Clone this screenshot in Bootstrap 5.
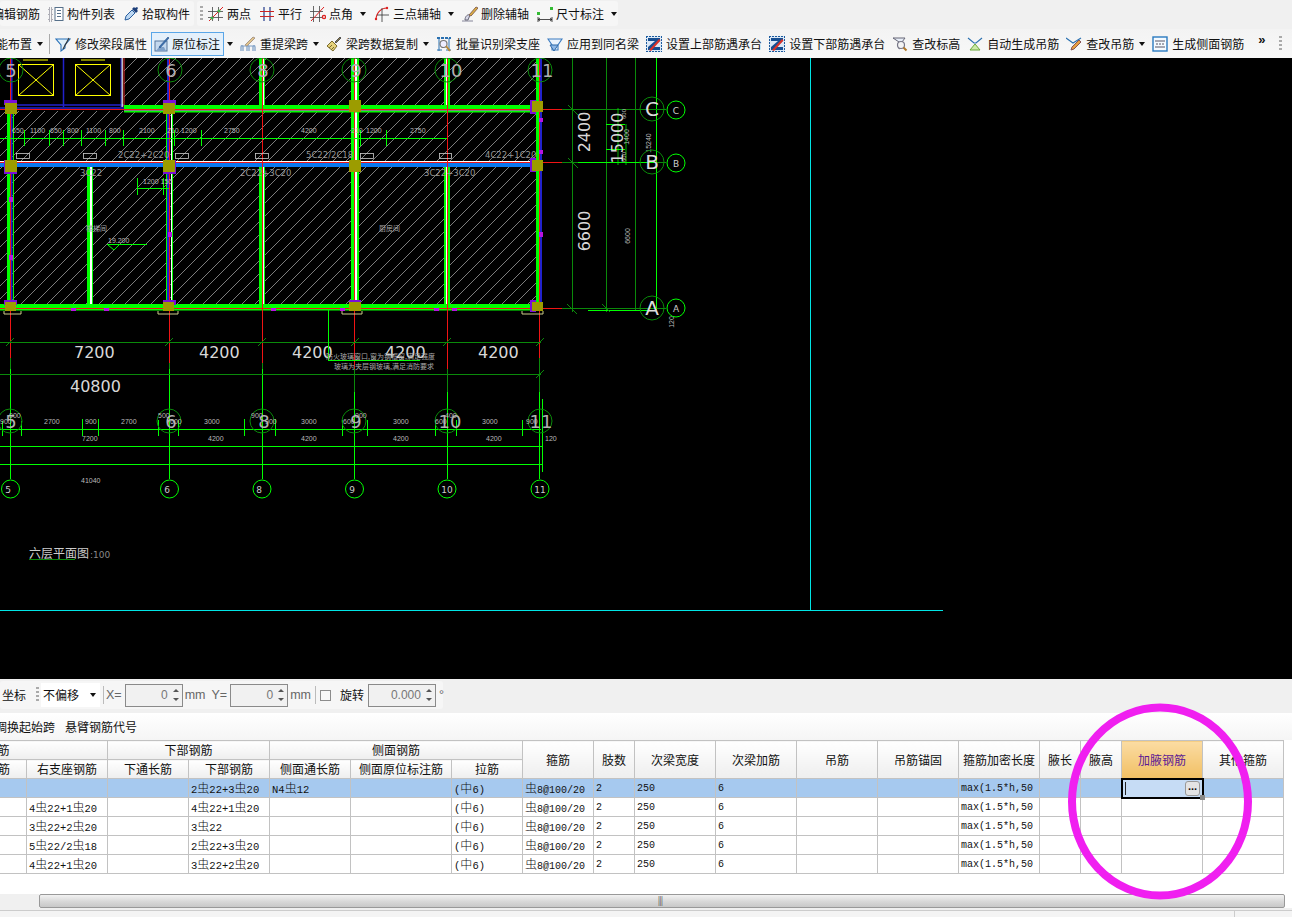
<!DOCTYPE html>
<html lang="zh">
<head>
<meta charset="utf-8">
<title>梁平法表格</title>
<link href="https://cdn.jsdelivr.net/npm/bootstrap@5.3.0/dist/css/bootstrap.min.css" rel="stylesheet">
<style>
html,body{height:917px;overflow:hidden;background:#f0f0f0}
body{font-family:"Noto Sans CJK SC","Liberation Sans",sans-serif;font-size:12px;color:#111;line-height:1}
.app{width:1292px;height:917px;position:relative;overflow:hidden}
.app>*{flex:none}
.tbar-a{height:29px;background:#f0f0f0;padding-top:1px}
.tbar-b{height:29px;background:linear-gradient(#f3f3f3,#f8f8f8)}
.chunk{height:25px;background:#f6f6f6;border-radius:3px;white-space:nowrap}
.chunk-one{width:194px;margin-right:3px;gap:8px}
.chunk-one .clipped{margin-left:-8px;flex:none}
.chunk-two{width:421px;padding-left:3px;gap:8px}
.chunk-two .grip{margin-right:-3px}
.tool{display:flex;align-items:center;gap:3px;white-space:nowrap;flex:none}
.row-two .tool{gap:4px}
.tool svg{width:16px;height:16px;flex:none}
.arrow{width:0;height:0;border:3.500px solid transparent;border-top:4px solid #111;border-bottom:0;margin-left:5px;flex:none}
.row-two .tool .arrow{margin-left:1px}
.row-two .tool svg+.arrow,.row-two .tool .arrow.far{margin-left:1px}
.grip{width:3px;height:16px;flex:none;background:repeating-linear-gradient(#aaa 0 2px,transparent 2px 4px)}
.vsep{width:1px;height:20px;background:#aaa;flex:none}
.row-two{gap:7px}
.clip-lead{margin-left:-16px}
.clip-lead+.vsep{margin-left:-1px;margin-right:-2px}
.row-two .tool.pressed{border:1px solid #5aa6e8;background:#e4f0fb;height:24px;padding:0 3px 0 2px;margin:0 -5px 0 -3px;gap:2px}
.overflow-mark{font-size:13px;font-weight:700;margin-left:7px;margin-top:-8px;font-family:"Liberation Sans",sans-serif}
.grip-end{margin-left:7px}
.drawing{height:621px;background:#000}
.drawing svg{display:block;width:1292px;height:621px}
.coordbar{height:34px;background:#f0f0f0;padding-top:2px}
.coordgroup{width:443px;height:28px;background:#f6f6f6;padding-left:2px;border-radius:3px}
.coordgroup>*{flex:none;white-space:nowrap}
.grip-gap{margin-left:10px}
.mini-sep{width:1px;height:18px;background:#bbb}
.picker{width:59px;height:24px;background:#fff;padding-left:2px;margin:0 3px 0 2px}
.numbox{height:23px;border:1px solid #8a8a8a;background:#f1f1f1;color:#777;display:flex;align-items:center;justify-content:flex-end;padding-right:3px;font-family:"Liberation Sans",sans-serif;font-size:12px}
.nb-s{width:58px}.nb-l{width:68px}
.spin{display:flex;flex-direction:column;gap:6px;margin-left:5px}
.spin i{display:block;width:0;height:0;border:3px solid transparent}
.spin i:first-child{border-bottom:3px solid #555;border-top:0}
.spin i:last-child{border-top:3px solid #555;border-bottom:0}
.unit{font-family:"Liberation Sans",sans-serif;color:#666;font-size:12.5px}
.sp2{margin-left:2px}.sp3{margin-left:3px}.sp6{margin-left:6px}.sp9{margin-left:9px}
.tick{width:11px;height:11px;border:1px solid #8c8c8c;background:#f8f8f8}
.linkbar{height:27px;background:linear-gradient(#fff,#f5f5f5);gap:10px}
.linkbar span:first-child{margin-left:-5px}
.gridwrap{background:#fff;height:154px;overflow:hidden}
.sheet{table-layout:fixed;width:1420px;margin-left:-137px;border-collapse:collapse;background:#fff}
.sheet th,.sheet td{border:1px solid #c2c2c2;height:19px;padding:0;overflow:hidden;white-space:nowrap}
.sheet th{font-weight:400;text-align:center;background:linear-gradient(#fff,#eee);font-size:12px}
.sheet td{padding-left:2px;padding-top:1px;font-family:"Liberation Mono",monospace;font-size:10px;vertical-align:middle}
.sheet td .cn{font-family:"Noto Sans CJK SC",sans-serif;font-size:12px;font-weight:300}
.sheet td.bars{font-size:10.5px}
.sheet tr.picked td{background:#a6c9ef}
.sheet th.live{background:linear-gradient(#fbdca3,#f1bf63);color:#5c1a94}
.sheet td.editing{background:#c6dcf5!important;outline:2px solid #000;outline-offset:-1px;position:relative;overflow:visible}
.cursor{display:inline-block;width:1px;height:13px;background:#222;margin-left:1px;vertical-align:middle}
.more{position:absolute;right:2px;top:2px;width:15px;height:15px;border:1px solid #999;border-radius:3px;background:#e4e4e4;font-family:"Liberation Sans",sans-serif;font-weight:700;font-size:11px;line-height:9px;text-align:center}
.handle{position:absolute;right:-3px;bottom:-3px;width:5px;height:5px;background:#888}
.scrollrow{height:14px;background:#fff}
.scroll-left{width:39px;background:#f0f0f0}
.scroll-thumb{width:1246px;border:1px solid #999;border-radius:2px;background:linear-gradient(#f2f2f2,#d8d8d8 55%,#c8c8c8);font-size:9px;color:#555;line-height:11px;letter-spacing:-1px;padding-right:4px}
.statusbar{height:7px;background:#f4f4f4;border-top:1px solid #ccc;margin-top:2px}
.statusbar div:first-child{width:1235px;border-right:1px solid #ccc}
.ring{position:absolute;left:0;top:0;width:1292px;height:917px;pointer-events:none}
.c82{width:82px}.c81{width:81px}.c101{width:101px}.c71{width:71px}.c41{width:41px}
.cad text{font-family:"DejaVu Sans",sans-serif;fill:#d8d8d8}
.cad .tiny{font-size:6px;fill:#bbb;font-family:"Liberation Sans",sans-serif}
.cad .lab{font-size:8.500px;fill:#999}
.cad .dim{font-size:7px;fill:#bbb;font-family:"Liberation Sans",sans-serif}
.cad .big{font-size:16px}
.cad .axis{font-size:20px;fill:#ddd}
.cad .grid-no{font-size:18px;fill:#b0b0b0}
.cad .bub{font-size:9px;fill:#ccc}
.cad .cnlab{font-family:"Noto Sans CJK SC",sans-serif;font-size:7px;fill:#aaa}
.cad .plan-title{font-family:"Noto Sans CJK SC",sans-serif;font-size:12px;fill:#ccc}
.cad .plan-scale{font-size:9px;fill:#888}
</style>
</head>
<body>
<svg width="0" height="0" class="d-block position-absolute" aria-hidden="true">
<defs>
<symbol id="i-list" viewBox="0 0 16 16"><path d="M1 2h3v3H1zM1 7h3v3H1zM1 12h3v3H1z" fill="none" stroke="#667" stroke-dasharray="1 1"/><rect x="7" y="1.500" width="8" height="13" fill="#fff" stroke="#56708a"/><path d="M9 4.500h4M9 7.500h4M9 10.500h4" stroke="#56708a"/></symbol>
<symbol id="i-pick" viewBox="0 0 16 16"><path d="M2 14l1-4 6-6 3 3-6 6z" fill="#bcd7f2" stroke="#2a5f9e"/><path d="M9 3l2-2 1 1 2-1 1 1-1 2 1 1-2 2z" fill="#1d3f7a"/></symbol>
<symbol id="i-two" viewBox="0 0 16 16"><path d="M4.500 1v14M10.500 1v14M0 5.500h15M0 11.500h15" stroke="#444" stroke-width=".8"/><path d="M1 15L15 1" stroke="#d22" stroke-width="1"/><circle cx="4" cy="12" r="1.600" fill="#4a4"/><circle cx="11" cy="5" r="1.600" fill="#4a4"/></symbol>
<symbol id="i-par" viewBox="0 0 16 16"><path d="M5 1v14M11 1v14" stroke="#223a8a" stroke-width="1.200"/><path d="M1 5.500h14M1 10.500h14" stroke="#c22" stroke-width="1.200"/></symbol>
<symbol id="i-ang" viewBox="0 0 16 16"><path d="M3.500 0v16M9.500 0v16M0 5.500h13M0 11.500h13" stroke="#444" stroke-width=".8"/><path d="M1 15L14 1" stroke="#d22"/><circle cx="14" cy="11" r="1.600" fill="none" stroke="#d22" stroke-width="1.400"/></symbol>
<symbol id="i-arc" viewBox="0 0 16 16"><path d="M2 14C2 7 7 2 13 2" fill="none" stroke="#d22" stroke-width="1.200"/><path d="M8 2v14M3 9h12" stroke="#333" stroke-width=".8"/><circle cx="2" cy="13" r="1.200" fill="#d22"/><circle cx="13" cy="2" r="1.200" fill="#d22"/></symbol>
<symbol id="i-erase" viewBox="0 0 16 16"><path d="M0 15h11" stroke="#99a" stroke-width="1.200"/><path d="M3 14c0-4 3-6 5-5l-2 5z" fill="#d8d8e8" stroke="#667"/><path d="M7 9l7-8 2 1-7 8z" fill="#e0b040" stroke="#865"/></symbol>
<symbol id="i-size" viewBox="0 0 16 16"><rect x="0" y="6" width="3" height="3" fill="#3b3"/><rect x="13" y="1" width="3" height="3" fill="#3b3"/><path d="M1 11v5M15 11v5M1 13.500h14M3 12l-2 1.500L3 15M13 12l2 1.500-2 1.500" fill="none" stroke="#222" stroke-width=".8"/></symbol>
<symbol id="i-funnel" viewBox="0 0 16 16"><path d="M1 3h14L10 9v3L6 15V9z" fill="#dff0fa" stroke="#2870b8" stroke-width="1.100"/><path d="M8 13L14 2" stroke="#333" stroke-width="1.100"/></symbol>
<symbol id="i-note" viewBox="0 0 16 16"><rect x="1" y="5" width="12" height="10" fill="#c4d8ee" stroke="#56779e"/><path d="M2 15l3-4h5l2 4z" fill="#7fa0c8"/><path d="M5 11L14 1l1 1-9 10z" fill="#3d70b0" stroke="#24508a" stroke-width=".6"/></symbol>
<symbol id="i-lift" viewBox="0 0 16 16"><path d="M1 15v-4c0-2 2-2 2 0v4M7 15v-4c0-2 2-2 2 0v4M13 15v-4c0-2 2-2 2 0v4M1 10h14" fill="none" stroke="#7a9cc4" stroke-width="1.200"/><path d="M5 9L13 1l2 1-8 8z" fill="#e2c48a" stroke="#a98"/></symbol>
<symbol id="i-brush" viewBox="0 0 16 16"><path d="M1 10l5-5 5 5-4 5z" fill="#e6d27a" stroke="#7a6a2a"/><path d="M9 6l5-5 1 1-5 5z" fill="#8a7a48" stroke="#555"/><path d="M3 12l3-3M5 14l3-3" stroke="#7a6a2a"/></symbol>
<symbol id="i-batch" viewBox="0 0 16 16"><path d="M1 2h14" stroke="#2a70b0" stroke-width="2" stroke-dasharray="3 1"/><path d="M3 2v13M13 2v13M1 14h5M10 14h5" stroke="#2a70b0"/><circle cx="7.500" cy="8" r="3.500" fill="#eef" stroke="#777" stroke-width="1.200"/><path d="M10 10l4 5" stroke="#b88a3a" stroke-width="2"/></symbol>
<symbol id="i-same" viewBox="0 0 16 16"><path d="M1 3h14l-4 6v5H5V9z" fill="#eaf3fc" stroke="#3b7bc0" stroke-width="1.100"/><path d="M3 9h8l-4 6z" fill="#8fb8e6" stroke="#2c68a8"/></symbol>
<symbol id="i-z" viewBox="0 0 16 16"><rect x="0" y="0" width="16" height="16" fill="#dce8f6"/><path d="M0 .500h16M0 15.500h16M.500 0v16M15.500 0v16" stroke="#1c5b9e" stroke-dasharray="2 1"/><path d="M2 2h12v3L7 11h7v3H2v-3l7-6H2z" fill="#174f92"/><path d="M3 14L13 3l1.500 1.500L5 15z" fill="#dc3228"/></symbol>
<symbol id="i-check" viewBox="0 0 16 16"><path d="M1 2h12l-3 4v5l-3 2V6z" fill="#e8eef8" stroke="#667"/><circle cx="9" cy="9" r="3.500" fill="#f4f4f4" stroke="#778" stroke-width="1.200"/><path d="M11.500 11.500l3 3" stroke="#b0782a" stroke-width="2"/></symbol>
<symbol id="i-auto" viewBox="0 0 16 16"><path d="M1 2l6 5h2l6-5" fill="none" stroke="#2a70b0" stroke-width="1.100"/><path d="M8 8l-5 6h10z" fill="#cdeaa8" stroke="#6aa83a"/></symbol>
<symbol id="i-hang" viewBox="0 0 16 16"><path d="M0 2l7 5 8-5" fill="none" stroke="#2a70b0" stroke-width="1.100"/><path d="M5 14l1-3 7-7 2 2-7 7z" fill="#e8a040" stroke="#855"/></symbol>
<symbol id="i-side" viewBox="0 0 16 16"><rect x="1" y="1" width="14" height="14" fill="#f4faff" stroke="#2a7ac0" stroke-width="1.400"/><path d="M3 5h10M3 11h10" stroke="#556"/><path d="M4 8h8" stroke="#556" stroke-dasharray="2 1"/></symbol>
<pattern id="hatch" width="13" height="13" patternUnits="userSpaceOnUse"><path d="M0 13L13 0" stroke="#d0d0d0" stroke-width=".6"/></pattern>
</defs>
</svg>

<div class="app d-flex flex-column">
  <div class="tbar-a d-flex">
    <div class="chunk chunk-one d-flex align-items-center overflow-hidden">
      <span class="clipped">编辑钢筋</span>
      <span class="tool"><svg><use href="#i-list"/></svg>构件列表</span>
      <span class="tool"><svg><use href="#i-pick"/></svg>拾取构件</span>
    </div>
    <div class="chunk chunk-two d-flex align-items-center">
      <span class="grip"></span>
      <span class="tool"><svg><use href="#i-two"/></svg>两点</span>
      <span class="tool"><svg><use href="#i-par"/></svg>平行</span>
      <span class="tool"><svg><use href="#i-ang"/></svg>点角<i class="arrow ms-1"></i></span>
      <span class="tool"><svg><use href="#i-arc"/></svg>三点辅轴<i class="arrow ms-1"></i></span>
      <span class="tool"><svg><use href="#i-erase"/></svg>删除辅轴</span>
      <span class="tool"><svg><use href="#i-size"/></svg>尺寸标注<i class="arrow ms-1"></i></span>
    </div>
  </div>
  <div class="tbar-b d-flex align-items-center row-two">
    <span class="tool clip-lead">智能布置<i class="arrow"></i></span>
    <span class="vsep"></span>
    <span class="tool"><svg><use href="#i-funnel"/></svg>修改梁段属性</span>
    <span class="tool pressed"><svg><use href="#i-note"/></svg>原位标注</span>
    <span class="tool"><i class="arrow"></i></span>
    <span class="tool"><svg><use href="#i-lift"/></svg>重提梁跨<i class="arrow"></i></span>
    <span class="tool"><svg><use href="#i-brush"/></svg>梁跨数据复制<i class="arrow"></i></span>
    <span class="tool"><svg><use href="#i-batch"/></svg>批量识别梁支座</span>
    <span class="tool"><svg><use href="#i-same"/></svg>应用到同名梁</span>
    <span class="tool"><svg><use href="#i-z"/></svg>设置上部筋遇承台</span>
    <span class="tool"><svg><use href="#i-z"/></svg>设置下部筋遇承台</span>
    <span class="tool"><svg><use href="#i-check"/></svg>查改标高</span>
    <span class="tool"><svg><use href="#i-auto"/></svg>自动生成吊筋</span>
    <span class="tool"><svg><use href="#i-hang"/></svg>查改吊筋<i class="arrow"></i></span>
    <span class="tool"><svg><use href="#i-side"/></svg>生成侧面钢筋</span>
    <span class="overflow-mark">»</span>
    <span class="grip grip-end"></span>
  </div>

  <div class="drawing">
    <svg class="cad" viewBox="0 58 1292 621" xmlns="http://www.w3.org/2000/svg">
      <rect x="0" y="58" width="1292" height="621" fill="#000"/>
      <!-- hatching -->
      <rect x="124" y="58" width="413" height="47" fill="url(#hatch)"/>
      <rect x="0" y="111" width="537" height="50" fill="url(#hatch)"/>
      <rect x="0" y="167" width="537" height="137" fill="url(#hatch)"/>
      <!-- frame and lift shafts -->
      <path d="M810.500 58V610.500M0 610.500H943" stroke="#00e5e5" fill="none"/>
      <g fill="none" stroke="#ff0">
        <rect x="18.500" y="64.500" width="35" height="31"/><path d="M18.500 64.500l35 31M53.500 64.500l-35 31M23 60h25"/>
        <rect x="75.500" y="64.500" width="35" height="31"/><path d="M75.500 64.500l35 31M110.500 64.500l-35 31M81 60h24"/>
      </g>
      <path d="M63.500 58v49M0 108h124M6 105h118" stroke="#2222cc" stroke-width="1.500" fill="none"/>
      <path d="M122 58v49" stroke="#fff" stroke-width="1.500"/><path d="M124 58v49" stroke="#e33"/><path d="M121 58v49" stroke="#22c"/>
      <!-- thick walls, vertical -->
      <g fill="#0f0">
        <rect x="7" y="111" width="3" height="195"/><rect x="13" y="111" width="1" height="195"/>
        <rect x="166" y="111" width="4" height="195"/><rect x="172" y="111" width="1" height="195"/>
        <rect x="87" y="167" width="3" height="138"/><rect x="92" y="167" width="1" height="138"/>
        <rect x="259" y="58" width="4" height="48"/><rect x="264" y="58" width="1" height="48"/>
        <rect x="259" y="167" width="4" height="138"/><rect x="264" y="167" width="1" height="138"/>
        <rect x="351" y="58" width="4" height="248"/><rect x="357" y="58" width="2" height="248"/>
        <rect x="444" y="58" width="2" height="48"/><rect x="448" y="58" width="2" height="48"/>
        <rect x="444" y="167" width="2" height="138"/><rect x="448" y="167" width="2" height="138"/>
        <rect x="536" y="58" width="3" height="250"/>
      </g>
      <g fill="#fff">
        <rect x="90" y="167" width="2" height="138"/><rect x="263" y="58" width="1" height="48"/><rect x="263" y="167" width="1" height="138"/>
        <rect x="355" y="58" width="2" height="248"/><rect x="446" y="58" width="2" height="48"/><rect x="446" y="167" width="2" height="138"/><rect x="171" y="111" width="1" height="195"/>
      </g>
      <path d="M11.500 58v248M168 58v248M541 58v250" stroke="#2222cc" stroke-width="2" fill="none"/>
      <!-- thick walls, horizontal -->
      <rect x="124" y="105" width="413" height="4" fill="#0f0"/><rect x="124" y="109.500" width="413" height="1" fill="#fff"/><rect x="124" y="111" width="413" height="1.500" fill="#0f0"/>
      <rect x="0" y="161" width="537" height="2" fill="#fff"/><rect x="0" y="163" width="537" height="4" fill="#0a78f0"/>
      <rect x="0" y="304" width="537" height="4" fill="#0f0"/><rect x="0" y="309" width="537" height="1.500" fill="#0f0"/>
      <!-- red axes -->
      <path d="M10.500 58V358M169.500 58V363M262.500 58V363M354.500 58V369M447.500 58V369M539.500 58V358" stroke="#f01414" fill="none"/>
      <path d="M0 109.500H562M0 162.500H562M0 308.500H562" stroke="#f01414" fill="none"/>
      <!-- green axes below -->
      <path d="M10.500 358V369M169.500 363V369M262.500 363V369M354.500 369V392M447.500 369V392M539.500 358V392" stroke="#0a8a0a" fill="none"/>
      <path d="M10.500 369V479M169.500 369V479M262.500 369V479M354.500 392V479M447.500 392V479M539.500 392V479" stroke="#0f0" fill="none"/>
      <!-- columns -->
      <g fill="#7a10d8"><rect x="4" y="100" width="13" height="5"/><rect x="163" y="100" width="13" height="5"/><rect x="4" y="160" width="13" height="14"/><rect x="163" y="160" width="13" height="14"/><rect x="4" y="300" width="13" height="5"/><rect x="163" y="300" width="13" height="5"/><rect x="530" y="100" width="6" height="14"/><rect x="530" y="158" width="6" height="14"/><rect x="530" y="300" width="6" height="12"/><rect x="349" y="300" width="12" height="5"/></g>
      <g fill="#9c9c00"><rect x="5" y="103" width="12" height="11"/><rect x="163" y="103" width="12" height="11"/><rect x="349" y="100" width="12" height="12"/><rect x="532" y="101" width="11" height="11"/><rect x="5" y="160" width="12" height="12"/><rect x="163" y="160" width="12" height="12"/><rect x="349" y="160" width="12" height="12"/><rect x="532" y="160" width="11" height="11"/><rect x="5" y="302" width="11" height="9"/><rect x="163" y="302" width="11" height="9"/><rect x="349" y="302" width="12" height="9"/><rect x="532" y="302" width="11" height="9"/></g>
      <g fill="#b814e0"><rect x="71" y="308" width="5" height="3"/><rect x="104" y="308" width="5" height="3"/><rect x="271" y="308" width="5" height="3"/><rect x="340" y="308" width="5" height="3"/><rect x="434" y="308" width="5" height="3"/><rect x="452" y="308" width="5" height="3"/><rect x="9" y="197" width="4" height="5"/><rect x="9" y="255" width="4" height="5"/><rect x="168" y="232" width="4" height="5"/><rect x="539" y="118" width="4" height="4"/><rect x="539" y="150" width="4" height="4"/><rect x="539" y="232" width="4" height="5"/></g>
      <path d="M4 311v3h17v-3M158 311v3h20v-3M342 311v3h20v-3M522 311v3h21v-3" fill="none" stroke="#cc8"/>
      <!-- plan annotations -->
      <path d="M0 138.500H447" stroke="#0f0"/>
      <path d="M24.500 130v16M49.500 130v16M63.500 130v16M81.500 130v16M105.500 130v16M123.500 130v16M174.500 130v16M201.500 130v16M360.500 130v16M386.500 130v16" stroke="#0f0"/>
      <g>
        <text class="dim" x="12" y="133">650</text><text class="dim" x="30" y="133">1100</text><text class="dim" x="50" y="133">650</text><text class="dim" x="67" y="133">800</text><text class="dim" x="86" y="133">1100</text><text class="dim" x="109" y="133">800</text><text class="dim" x="139" y="133">2100</text><text class="dim" x="167" y="133">210</text><text class="dim" x="181" y="133">1200</text><text class="dim" x="224" y="133">2750</text><text class="dim" x="301" y="133">4200</text><text class="dim" x="351" y="133">210</text><text class="dim" x="366" y="133">1200</text><text class="dim" x="410" y="133">2750</text>
      </g>
      <g fill="none" stroke="#ccc" stroke-width=".8"><rect x="16.500" y="153.500" width="13" height="5"/><rect x="83.500" y="153.500" width="13" height="5"/><rect x="175.500" y="153.500" width="13" height="5"/><rect x="255.500" y="153.500" width="13" height="5"/><rect x="360.500" y="153.500" width="13" height="5"/><rect x="439.500" y="153.500" width="12" height="5"/></g>
      <text class="lab" x="118" y="158">2C22+2C20</text><text class="lab" x="306" y="158">5C22/2C18</text><text class="lab" x="485" y="158">4C22+1C20</text>
      <text class="lab" x="80" y="176">3C22</text><text class="lab" x="240" y="176">2C22+3C20</text><text class="lab" x="424" y="176">3C22+3C20</text>
      <path d="M137.500 178v17M163.500 178v17M137 188.500h32" stroke="#0f0"/><text class="dim" x="143" y="184">1200 150</text>
      <text class="cnlab" x="86" y="231">楼梯间</text><text class="cnlab" x="379" y="231">厨房间</text>
      <text class="dim" x="108" y="243">19.200</text><path d="M107 244.500h40M108 245l6 5 5-5" fill="none" stroke="#0f0"/>
      <!-- right dimensions -->
      <path d="M572.500 58V312M606.500 58V312M635.500 58V310" stroke="#0a8a0a" fill="none"/><path d="M656.500 58V310" stroke="#0f0"/>
      <path d="M562 109.500H666M562 162.500H666M562 308.500H666" stroke="#0a8a0a"/><path d="M578 162.500H656M588 310.500H656M606 124.500H625M606 149.500H625" stroke="#0f0"/><path d="M618 108V165M626 124V165" stroke="#0f0" stroke-width=".7"/>
      <path d="M568 105l10 10M568 158l10 10M567 304l10 10M602 304l8 8" stroke="#0a8a0a"/>
      <text class="big" transform="translate(590 132) rotate(-90)" text-anchor="middle">2400</text>
      <text class="big" transform="translate(590 231) rotate(-90)" text-anchor="middle">6600</text>
      <text class="big" transform="translate(623 138) rotate(-90)" text-anchor="middle">15000</text>
      <text class="dim" transform="translate(630 236) rotate(-90)" text-anchor="middle">6600</text>
      <text class="dim" transform="translate(629 137) rotate(-90)" text-anchor="middle">1400</text>
      <text class="tiny" transform="translate(626 114) rotate(-90)" text-anchor="middle">600</text>
      <text class="tiny" transform="translate(626 157) rotate(-90)" text-anchor="middle">600</text>
      <text class="dim" transform="translate(651 143) rotate(-90)" text-anchor="middle">15240</text>
      <text class="dim" transform="translate(674 322) rotate(-90)" text-anchor="middle">120</text>
      <g fill="none" stroke="#0a8a0a"><circle cx="652" cy="109" r="12"/><circle cx="652" cy="162" r="12"/><circle cx="652" cy="308" r="12"/></g>
      <g fill="none" stroke="#0f0"><circle cx="676" cy="110" r="9"/><circle cx="676" cy="163" r="9"/><circle cx="676" cy="308" r="9"/></g>
      <text class="axis" x="652" y="116" text-anchor="middle">C</text><text class="axis" x="652" y="169" text-anchor="middle">B</text><text class="axis" x="652" y="315" text-anchor="middle">A</text>
      <text class="bub" x="676" y="114" text-anchor="middle">C</text><text class="bub" x="676" y="167" text-anchor="middle">B</text><text class="bub" x="676" y="312" text-anchor="middle">A</text>
      <!-- top bubbles -->
      <g fill="none" stroke="#0a8a0a"><circle cx="11" cy="70" r="12"/><circle cx="170" cy="70" r="12"/><circle cx="262" cy="70" r="12"/><circle cx="354" cy="70" r="12"/><circle cx="447" cy="70" r="12"/><circle cx="540" cy="70" r="12"/></g>
      <g><text class="grid-no" x="11" y="77" text-anchor="middle">5</text><text class="grid-no" x="171" y="77" text-anchor="middle">6</text><text class="grid-no" x="263" y="77" text-anchor="middle">8</text><text class="grid-no" x="356" y="77" text-anchor="middle">9</text><text class="grid-no" x="451" y="77" text-anchor="middle">10</text><text class="grid-no" x="542" y="77" text-anchor="middle">11</text></g>
      <!-- bottom dimensions -->
      <path d="M0 342.500H541M0 374.500H541" stroke="#0a8a0a"/><path d="M6 346l8-8M165 346l8-8M258 346l8-8M351 346l8-8M443 346l8-8M536 346l8-8M536 378l8-8" stroke="#0a8a0a"/>
      <g><text class="big" x="74" y="358">7200</text><text class="big" x="199" y="358">4200</text><text class="big" x="292" y="358">4200</text><text class="big" x="385" y="358">4200</text><text class="big" x="478" y="358">4200</text><text class="big" x="70" y="392">40800</text></g>
      <path d="M328.500 310V360M328 360.500H420" stroke="#0f0" fill="none"/>
      <text class="cnlab" x="326" y="359">防火玻璃窗口,窗为钢框窗,满足强度</text><text class="cnlab" x="334" y="369">玻璃为夹层钢玻璃,满足消防要求</text>
      <path d="M0 429.500H541M0 446.500H542M0 464.500H542M542.500 399V472" stroke="#0f0" fill="none"/>
      <path d="M2.500 421v15M21.500 421v15M82.500 419v17M98.500 419v17M158.500 420v16M178.500 420v16M244.500 419v17M275.500 419v17M342.500 420v16M367.500 420v16M435.500 420v16M456.500 420v16M522.500 420v16" stroke="#0f0"/>
      <g fill="none" stroke="#0a8a0a"><circle cx="10" cy="421" r="12"/><circle cx="169" cy="421" r="12"/><circle cx="262" cy="421" r="12"/><circle cx="354" cy="421" r="12"/><circle cx="447" cy="421" r="12"/><circle cx="540" cy="421" r="12"/></g>
      <g><text class="grid-no" x="11" y="428" text-anchor="middle">5</text><text class="grid-no" x="171" y="428" text-anchor="middle">6</text><text class="grid-no" x="264" y="428" text-anchor="middle">8</text><text class="grid-no" x="356" y="428" text-anchor="middle">9</text><text class="grid-no" x="450" y="428" text-anchor="middle">10</text><text class="grid-no" x="541" y="428" text-anchor="middle">11</text></g>
      <g>
        <text class="dim" x="0" y="424">900</text><text class="dim" x="44" y="424">2700</text><text class="dim" x="85" y="424">900</text><text class="dim" x="121" y="424">2700</text><text class="dim" x="170" y="424">600</text><text class="dim" x="204" y="424">3000</text><text class="dim" x="265" y="424">900</text><text class="dim" x="301" y="424">3000</text><text class="dim" x="343" y="424">600</text><text class="dim" x="393" y="424">3000</text><text class="dim" x="435" y="424">600</text><text class="dim" x="482" y="424">3000</text><text class="dim" x="526" y="424">900</text>
        <text class="dim" x="9" y="418">900</text><text class="dim" x="158" y="418">500</text><text class="dim" x="251" y="418">900</text><text class="dim" x="355" y="418">900</text><text class="dim" x="445" y="418">400</text>
        <text class="dim" x="82" y="441">7200</text><text class="dim" x="208" y="441">4200</text><text class="dim" x="301" y="441">4200</text><text class="dim" x="393" y="441">4200</text><text class="dim" x="486" y="441">4200</text><text class="dim" x="545" y="441">120</text>
        <text class="dim" x="81" y="483">41040</text>
      </g>
      <g fill="none" stroke="#0f0"><circle cx="10.500" cy="489" r="9"/><circle cx="169.500" cy="489" r="9"/><circle cx="262" cy="489" r="9"/><circle cx="354.500" cy="489" r="9"/><circle cx="447" cy="489" r="9"/><circle cx="540" cy="489" r="9"/></g>
      <g><text class="bub" x="8" y="493" text-anchor="middle">5</text><text class="bub" x="167" y="493" text-anchor="middle">6</text><text class="bub" x="259" y="493" text-anchor="middle">8</text><text class="bub" x="352" y="493" text-anchor="middle">9</text><text class="bub" x="447" y="493" text-anchor="middle">10</text><text class="bub" x="540" y="493" text-anchor="middle">11</text></g>
      <text class="plan-title" x="29" y="558">六层平面图</text>
      <text class="plan-scale" x="90" y="558">:100</text>
      <path d="M29 559.500H75" stroke="#0a8a0a"/>
    </svg>
  </div>

  <div class="coordbar d-flex">
    <div class="coordgroup d-flex align-items-center">
      <span>坐标</span>
      <span class="grip grip-gap"></span>
      <span class="picker d-flex align-items-center justify-content-between"><span>不偏移</span><i class="arrow me-1"></i></span>
      <span class="mini-sep"></span>
      <span class="unit sp2">X=</span>
      <span class="numbox nb-s sp3">0<span class="spin"><i></i><i></i></span></span>
      <span class="unit sp2">mm</span>
      <span class="unit sp6">Y=</span>
      <span class="numbox nb-s sp3">0<span class="spin"><i></i><i></i></span></span>
      <span class="unit sp2">mm</span>
      <span class="mini-sep ms-1"></span>
      <span class="tick ms-1"></span>
      <span class="sp9">旋转</span>
      <span class="numbox nb-l ms-1">0.000<span class="spin"><i></i><i></i></span></span>
      <span class="unit sp3">°</span>
    </div>
  </div>
  <div class="linkbar d-flex align-items-center"><span>调换起始跨</span><span>悬臂钢筋代号</span></div>

  <div class="gridwrap">
    <table class="sheet">
      <colgroup>
        <col class="c82"><col class="c81"><col class="c81"><col class="c81"><col class="c81"><col class="c81"><col class="c101"><col class="c71"><col class="c71"><col class="c41"><col class="c81"><col class="c81"><col class="c81"><col class="c81"><col class="c81"><col class="c41"><col class="c41"><col class="c81"><col class="c81">
      </colgroup>
      <thead>
        <tr><th colspan="3">上部钢筋</th><th colspan="2">下部钢筋</th><th colspan="3">侧面钢筋</th><th rowspan="2">箍筋</th><th rowspan="2">肢数</th><th rowspan="2">次梁宽度</th><th rowspan="2">次梁加筋</th><th rowspan="2">吊筋</th><th rowspan="2">吊筋锚固</th><th rowspan="2">箍筋加密长度</th><th rowspan="2">腋长</th><th rowspan="2">腋高</th><th rowspan="2" class="live">加腋钢筋</th><th rowspan="2">其他箍筋</th></tr>
        <tr><th>上通长筋</th><th>跨中钢筋</th><th>右支座钢筋</th><th>下通长筋</th><th>下部钢筋</th><th>侧面通长筋</th><th>侧面原位标注筋</th><th>拉筋</th></tr>
      </thead>
      <tbody>
        <tr class="picked"><td></td><td></td><td></td><td></td><td class="bars">2<span class="cn">虫</span>22+3<span class="cn">虫</span>20</td><td class="bars">N4<span class="cn">虫</span>12</td><td></td><td class="bars">(<span class="cn">中</span>6)</td><td><span class="cn">虫</span>8@100/20</td><td>2</td><td>250</td><td>6</td><td></td><td></td><td>max(1.5*h,50</td><td></td><td></td><td class="editing"><span class="cursor"></span><span class="more">...</span><i class="handle"></i></td><td></td></tr>
        <tr><td></td><td></td><td class="bars">4<span class="cn">虫</span>22+1<span class="cn">虫</span>20</td><td></td><td class="bars">4<span class="cn">虫</span>22+1<span class="cn">虫</span>20</td><td></td><td></td><td class="bars">(<span class="cn">中</span>6)</td><td><span class="cn">虫</span>8@100/20</td><td>2</td><td>250</td><td>6</td><td></td><td></td><td>max(1.5*h,50</td><td></td><td></td><td></td><td></td></tr>
        <tr><td></td><td></td><td class="bars">3<span class="cn">虫</span>22+2<span class="cn">虫</span>20</td><td></td><td class="bars">3<span class="cn">虫</span>22</td><td></td><td></td><td class="bars">(<span class="cn">中</span>6)</td><td><span class="cn">虫</span>8@100/20</td><td>2</td><td>250</td><td>6</td><td></td><td></td><td>max(1.5*h,50</td><td></td><td></td><td></td><td></td></tr>
        <tr><td></td><td></td><td class="bars">5<span class="cn">虫</span>22/2<span class="cn">虫</span>18</td><td></td><td class="bars">2<span class="cn">虫</span>22+3<span class="cn">虫</span>20</td><td></td><td></td><td class="bars">(<span class="cn">中</span>6)</td><td><span class="cn">虫</span>8@100/20</td><td>2</td><td>250</td><td>6</td><td></td><td></td><td>max(1.5*h,50</td><td></td><td></td><td></td><td></td></tr>
        <tr><td></td><td></td><td class="bars">4<span class="cn">虫</span>22+1<span class="cn">虫</span>20</td><td></td><td class="bars">3<span class="cn">虫</span>22+2<span class="cn">虫</span>20</td><td></td><td></td><td class="bars">(<span class="cn">中</span>6)</td><td><span class="cn">虫</span>8@100/20</td><td>2</td><td>250</td><td>6</td><td></td><td></td><td>max(1.5*h,50</td><td></td><td></td><td></td><td></td></tr>
      </tbody>
    </table>
  </div>
  <div class="scrollrow d-flex">
    <div class="scroll-left"></div>
    <div class="scroll-thumb text-center">|||</div>
  </div>
  <div class="statusbar d-flex"><div></div><div></div></div>

  <svg class="ring" viewBox="0 0 1292 917" xmlns="http://www.w3.org/2000/svg">
    <ellipse cx="1160" cy="801.500" rx="88" ry="94" fill="none" stroke="#f01ff0" stroke-width="8"/>
  </svg>
</div>
<script src="https://cdn.jsdelivr.net/npm/bootstrap@5.3.0/dist/js/bootstrap.bundle.min.js"></script>
</body>
</html>
